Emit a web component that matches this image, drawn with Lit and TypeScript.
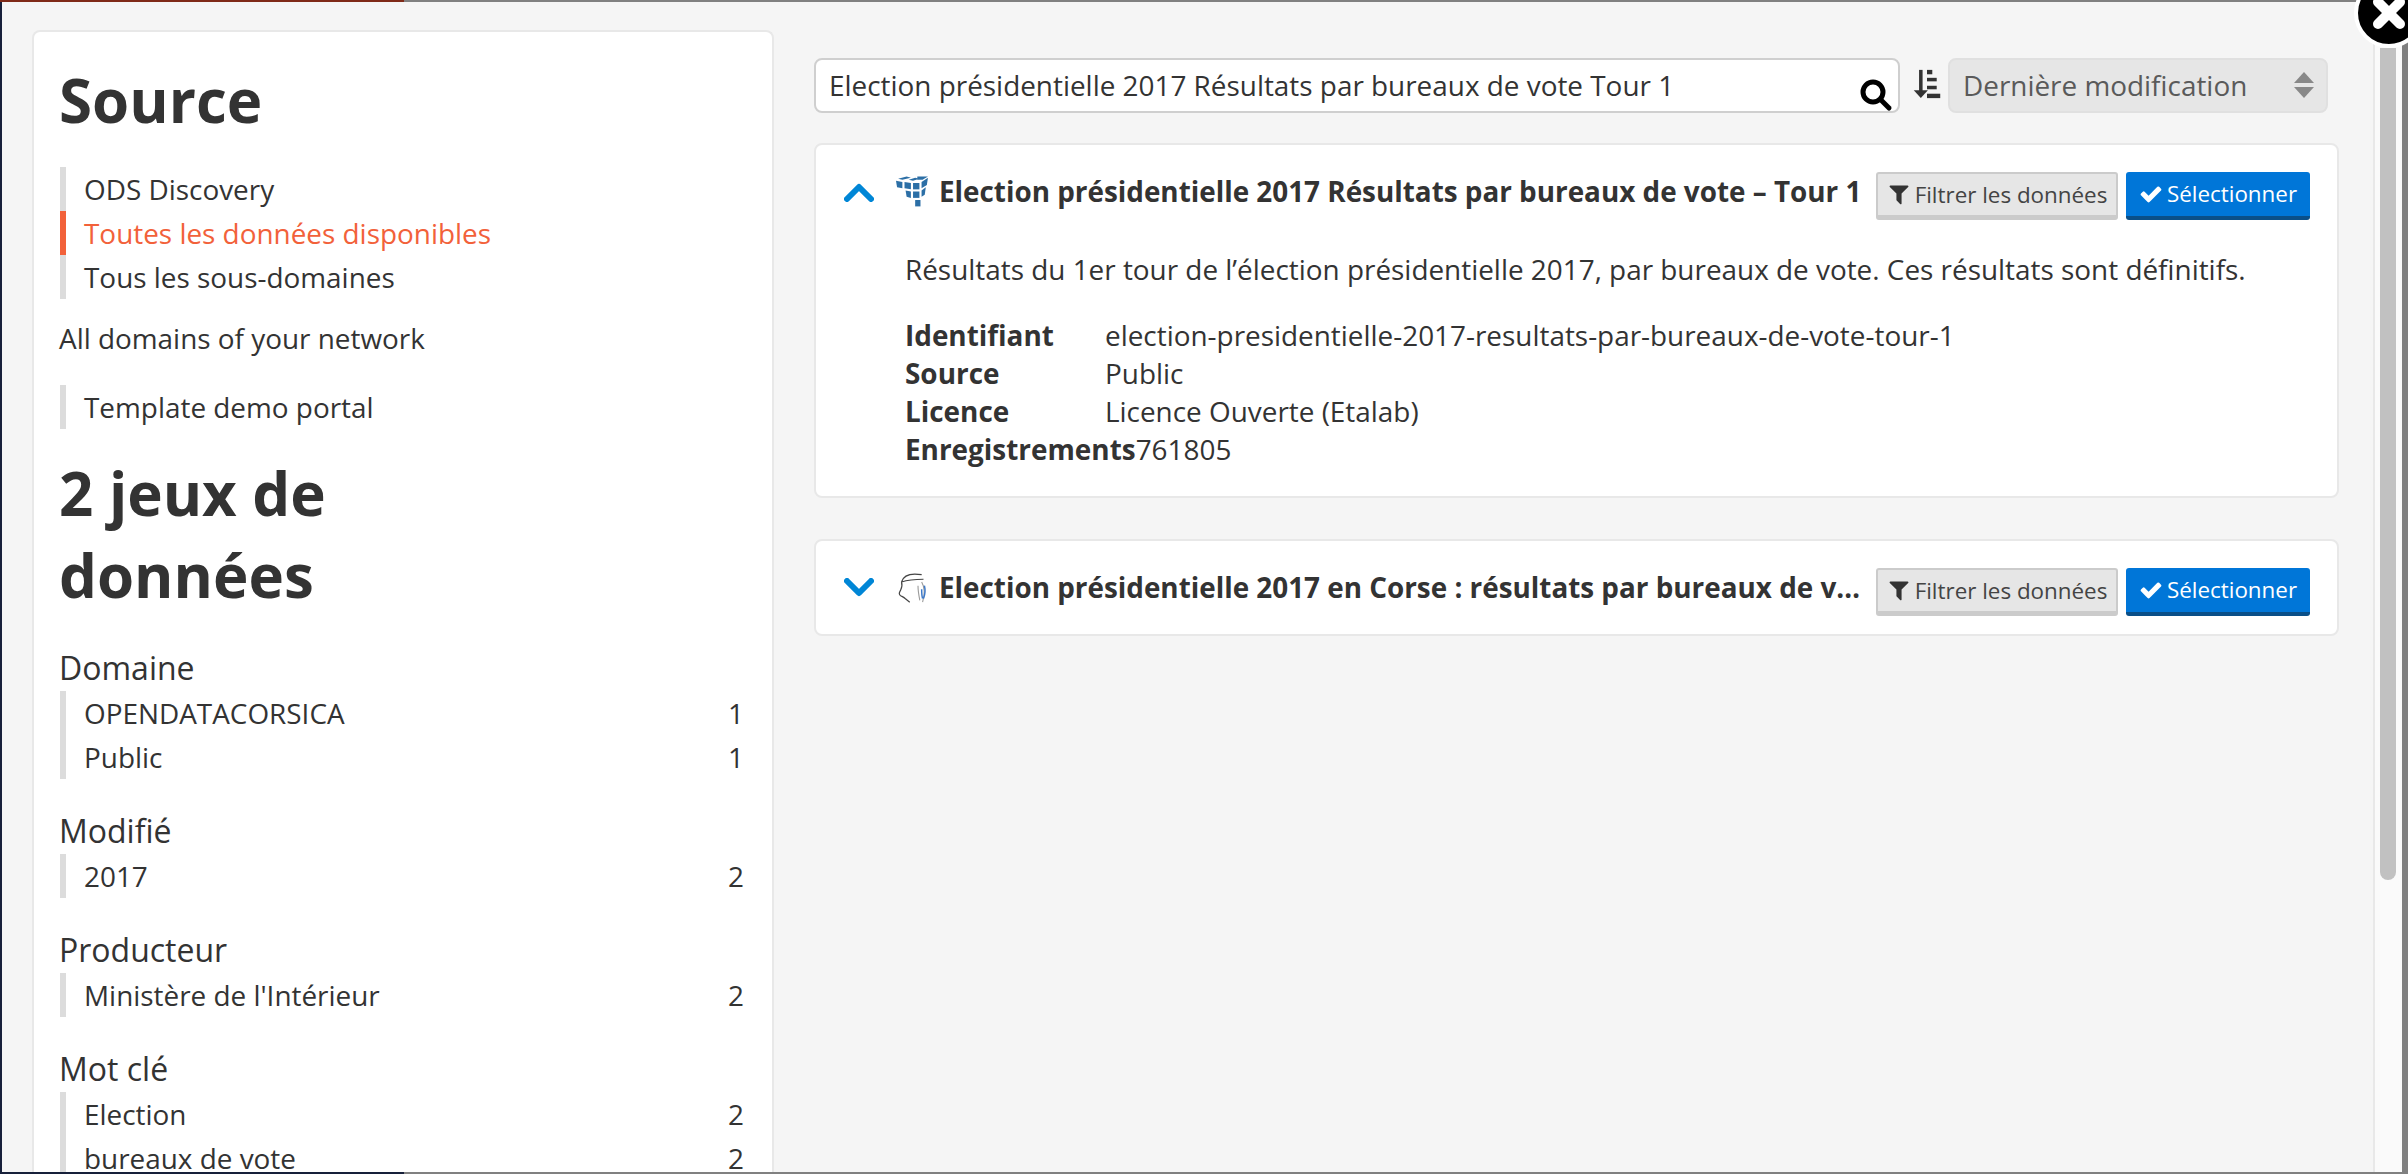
import { LitElement, css, html, svg } from "lit";
import { customElement } from "lit/decorators.js";

const CHECK = "M1671 566q0 40-28 68l-724 724-136 136q-28 28-68 28t-68-28l-136-136-362-362q-28-28-28-68t28-68l136-136q28-28 68-28t68 28l294 295 656-657q28-28 68-28t68 28l136 136q28 28 28 68z";
const FILTER = "M1595 295q17 41-14 70l-493 493v742q0 42-39 59-13 5-25 5-27 0-45-19l-256-256q-19-19-19-45v-486l-493-493q-31-29-14-70 17-39 59-39h1280q42 0 59 39z";

const sources = [
  { label: "ODS Discovery" },
  { label: "Toutes les données disponibles", active: true },
  { label: "Tous les sous-domaines" },
];

const facets = [
  { name: "Domaine", items: [["OPENDATACORSICA", 1], ["Public", 1]] },
  { name: "Modifié", items: [["2017", 2]] },
  { name: "Producteur", items: [["Ministère de l'Intérieur", 2]] },
  { name: "Mot clé", items: [["Election", 2], ["bureaux de vote", 2]] },
];

const details = [
  ["Identifiant", "election-presidentielle-2017-resultats-par-bureaux-de-vote-tour-1"],
  ["Source", "Public"],
  ["Licence", "Licence Ouverte (Etalab)"],
  ["Enregistrements", "761805"],
];

// cube logo of the first dataset, one tile per entry
const cubeTiles = [
  "2,2 10,0 14,1 6,3",
  "12,3 18,1 22,2 16,4",
  "20,0 30,0 25,3 20,3",
  "0,4 6,5 6,11 1,10",
  "8,5 14,6 14,12 8,11",
  "16,6 22,6 22,12 16,12",
  "24,5 30,1 29,8 24,11",
  "9,13 14,14 14,20 10,19",
  "16,14 22,14 22,20 16,20",
  "24,13 28,10 27,17 24,19",
  "18,22 23,22 23,28 18,28",
];

@customElement("app-root")
export class AppRoot extends LitElement {
  static styles = css`
    :host {
      display: block;
      font-family: "Open Sans", "Noto Sans", sans-serif;
      color: #333;
    }
    * {
      box-sizing: border-box;
    }
    .page {
      position: relative;
      width: 2408px;
      height: 1174px;
      overflow: hidden;
      padding: 2px 6px 2px 2px;
      background:
        linear-gradient(90deg, #7f2a18 404px, #808080 404px) top / 100% 2px no-repeat,
        linear-gradient(90deg, #17203a 404px, #808080 404px) bottom / 100% 2px no-repeat,
        linear-gradient(#17203a, #17203a) left / 2px 100% no-repeat,
        #808080;
    }
    .modal {
      display: flex;
      height: 100%;
      background: #f5f5f5;
      overflow: hidden;
    }
    .sidebar {
      flex: none;
      width: 742px;
      margin: 28px 0 0 30px;
      padding: 28px 26px 0;
      background: #fff;
      border: 2px solid #e8e8e8;
      border-bottom: 0;
      border-radius: 8px 8px 0 0;
      height: 1200px;
    }
    h2 {
      margin: 0 0 0 -1px;
      font-size: 60px;
      line-height: 81px;
      font-weight: 700;
      color: #333;
    }
    .nav {
      margin: 0;
      list-style: none;
      padding: 0;
    }
    .nav li {
      display: flex;
      justify-content: space-between;
      height: 44px;
      line-height: 44px;
      padding: 0 2px 0 18px;
      border-left: 6px solid #dcdcdc;
      background: #fff;
      font-size: 27.9px;
    }
    .nav li.active {
      color: #f2613a;
      border-left-color: #f2613a;
    }
    .sources {
      margin-top: 26px;
    }
    .network {
      margin: 17px 0 25px -1px;
      height: 44px;
      line-height: 44px;
      font-size: 27.9px;
    }
    .results {
      margin-top: 23px;
      margin-bottom: 29px;
      line-height: 82px;
    }
    .facet {
      margin-bottom: 29px;
    }
    .facet h3 {
      margin: 0 0 0 -1px;
      font-size: 32px;
      font-weight: 400;
      line-height: 46px;
      height: 46px;
    }
    .main {
      flex: none;
      width: 1525px;
      margin-left: 40px;
      padding-top: 56px;
      display: flex;
      flex-direction: column;
    }
    .toolbar {
      display: flex;
      height: 55px;
      align-items: stretch;
    }
    .search {
      position: relative;
      width: 1086px;
      background: #fff;
      border: 2px solid #cfcfcf;
      border-radius: 8px;
      padding-left: 13px;
      line-height: 51px;
      font-size: 27.9px;
      white-space: nowrap;
    }
    .search svg {
      position: absolute;
      right: 5px;
      bottom: -1px;
    }
    .sort {
      width: 48px;
      padding: 0 0 4px 6px;
      display: flex;
      align-items: center;
      justify-content: center;
    }
    .select {
      width: 380px;
      display: flex;
      align-items: center;
      justify-content: space-between;
      padding: 0 12px 2px 13px;
      background: #e6e6e6;
      border: 2px solid #e0e0e0;
      border-radius: 8px;
      color: #5a5a5a;
      font-size: 27.9px;
    }
    .card {
      width: 100%;
      background: #fff;
      border: 2px solid #e8e8e8;
      border-radius: 8px;
    }
    .card + .card {
      margin-top: 41px;
    }
    .cards {
      margin-top: 30px;
    }
    .head {
      display: flex;
      align-items: center;
      height: 93px;
      padding: 0 27px 0 28px;
    }
    .chevron {
      flex: none;
      width: 30px;
      height: 20px;
      margin-right: 22px;
    }
    .logo {
      flex: none;
      width: 33px;
      height: 33px;
      margin-right: 10px;
    }
    .title {
      flex: 1;
      min-width: 0;
      padding-bottom: 2px;
      font-size: 27.85px;
      font-weight: 700;
      white-space: nowrap;
      overflow: hidden;
      text-overflow: ellipsis;
    }
    .btn {
      flex: none;
      height: 48px;
      margin-top: 8px;
      display: flex;
      align-items: center;
      justify-content: center;
      gap: 4px;
      font-size: 22.4px;
      border-radius: 3px;
    }
    .btn.filter {
      width: 242px;
      margin-left: 4px;
      background: #e6e6e6;
      color: #444;
      border: 2px solid #cbcbcb;
      border-bottom-width: 5px;
    }
    .btn.pick {
      width: 184px;
      margin-left: 8px;
      background: #0076d8;
      color: #fff;
      border-bottom: 4px solid #0a4f88;
    }
    .body {
      padding: 12px 28px 28px 89px;
      font-size: 27.9px;
    }
    .body p {
      margin: 0 0 28px;
      line-height: 38px;
    }
    .row {
      display: flex;
      height: 38px;
      line-height: 38px;
    }
    .row b {
      flex: none;
      min-width: 200px;
      white-space: nowrap;
      font-weight: 700;
    }
    .rail {
      flex: none;
      width: 29px;
      margin-left: 34px;
      background: #fafafa;
      border-left: 2px solid #e8e8e8;
      padding: 0 6px 0 5px;
    }
    .thumb {
      margin-top: 46px;
      height: 832px;
      background: #c1c1c1;
      border-radius: 0 0 10px 10px;
    }
    .close {
      position: absolute;
      left: 2354px;
      top: -22px;
      width: 70px;
      height: 70px;
      border-radius: 50%;
      background: #000;
      border: 4px solid #fff;
      display: flex;
      align-items: center;
      justify-content: center;
    }
  `;

  private icon(d: string, size: number, color: string) {
    return html`<svg width=${size} height=${size} viewBox="0 0 1792 1792"><path d=${d} fill=${color}></path></svg>`;
  }

  private chevron(up: boolean) {
    const pts = up ? "3,17 15,5 27,17" : "3,3 15,15 27,3";
    return html`<svg class="chevron" viewBox="0 0 30 20">
      <polyline points=${pts} fill="none" stroke="#0086d6" stroke-width="6" stroke-linecap="round" stroke-linejoin="round"></polyline>
    </svg>`;
  }

  private cube() {
    return html`<svg class="logo" viewBox="0 0 31 28">
      ${cubeTiles.map((p) => svg`<polygon points=${p} fill="#2c6fa6"></polygon>`)}
    </svg>`;
  }

  private head_logo() {
    return html`<svg class="logo" viewBox="0 0 36 36">
      <path d="M6 12C8 5 16 2 28 4M6 12c6-2 14-3 24-3M6 12c1 3 1 5-1 9-1 2-3 4 0 6 2 1 3 1 5 3l5 4" fill="none" stroke="#444" stroke-width="1.3"></path>
      <path d="M28 12c3 5 4 12 1 22M24 16c0 6 1 11 2 16" fill="none" stroke="#9a9a9a" stroke-width="1.2"></path>
      <path d="M31 16c1 4 1 9-1 14M28 20c0 4 0 7 1 10" fill="none" stroke="#3b78c9" stroke-width="1.6"></path>
    </svg>`;
  }

  private actions() {
    return html`
      <div class="btn filter">${this.icon(FILTER, 24, "#333")}<span>Filtrer les données</span></div>
      <div class="btn pick">${this.icon(CHECK, 24, "#fff")}<span>Sélectionner</span></div>
    `;
  }

  render() {
    return html`
      <div class="page">
        <div class="modal">
          <aside class="sidebar">
            <h2>Source</h2>
            <ul class="nav sources">
              ${sources.map((s) => html`<li class=${s.active ? "active" : ""}>${s.label}</li>`)}
            </ul>
            <div class="network">All domains of your network</div>
            <ul class="nav"><li>Template demo portal</li></ul>
            <h2 class="results">2 jeux de<br />données</h2>
            ${facets.map(
              (f) => html`<div class="facet">
                <h3>${f.name}</h3>
                <ul class="nav">
                  ${f.items.map((it) => html`<li><span>${it[0]}</span><span>${it[1]}</span></li>`)}
                </ul>
              </div>`
            )}
          </aside>
          <section class="main">
            <div class="toolbar">
              <div class="search">
                Election présidentielle 2017 Résultats par bureaux de vote Tour 1
                <svg width="34" height="34" viewBox="0 0 34 34">
                  <circle cx="14" cy="14" r="10" fill="none" stroke="#000" stroke-width="5"></circle>
                  <line x1="22" y1="22" x2="30" y2="30" stroke="#000" stroke-width="5" stroke-linecap="round"></line>
                </svg>
              </div>
              <div class="sort">
                <svg width="28" height="30" viewBox="0 0 30 34">
                  <rect x="6" y="1" width="4" height="26" fill="#333"></rect>
                  <polygon points="0,24 16,24 8,33" fill="#333"></polygon>
                  <rect x="15" y="1" width="6" height="5" fill="#333"></rect>
                  <rect x="15" y="10" width="11" height="4" fill="#333"></rect>
                  <rect x="15" y="19" width="11" height="4" fill="#333"></rect>
                  <rect x="15" y="28" width="15" height="5" fill="#333"></rect>
                </svg>
              </div>
              <div class="select">
                <span>Dernière modification</span>
                <svg width="20" height="26" viewBox="0 0 20 26">
                  <polygon points="10,0 20,11 0,11" fill="#888"></polygon>
                  <polygon points="0,15 20,15 10,26" fill="#888"></polygon>
                </svg>
              </div>
            </div>
            <div class="cards">
              <article class="card">
                <div class="head">
                  ${this.chevron(true)} ${this.cube()}
                  <div class="title">Election présidentielle 2017 Résultats par bureaux de vote – Tour 1</div>
                  ${this.actions()}
                </div>
                <div class="body">
                  <p>Résultats du 1er tour de l’élection présidentielle 2017, par bureaux de vote. Ces résultats sont définitifs.</p>
                  ${details.map((d) => html`<div class="row"><b>${d[0]}</b><span>${d[1]}</span></div>`)}
                </div>
              </article>
              <article class="card">
                <div class="head">
                  ${this.chevron(false)} ${this.head_logo()}
                  <div class="title">Election présidentielle 2017 en Corse : résultats par bureaux de vote</div>
                  ${this.actions()}
                </div>
              </article>
            </div>
          </section>
          <div class="rail"><div class="thumb"></div></div>
        </div>
        <div class="close">
          <svg width="36" height="36" viewBox="0 0 36 36">
            <path d="M7 7L29 29M29 7L7 29" stroke="#fff" stroke-width="10" stroke-linecap="round"></path>
          </svg>
        </div>
      </div>
    `;
  }
}
